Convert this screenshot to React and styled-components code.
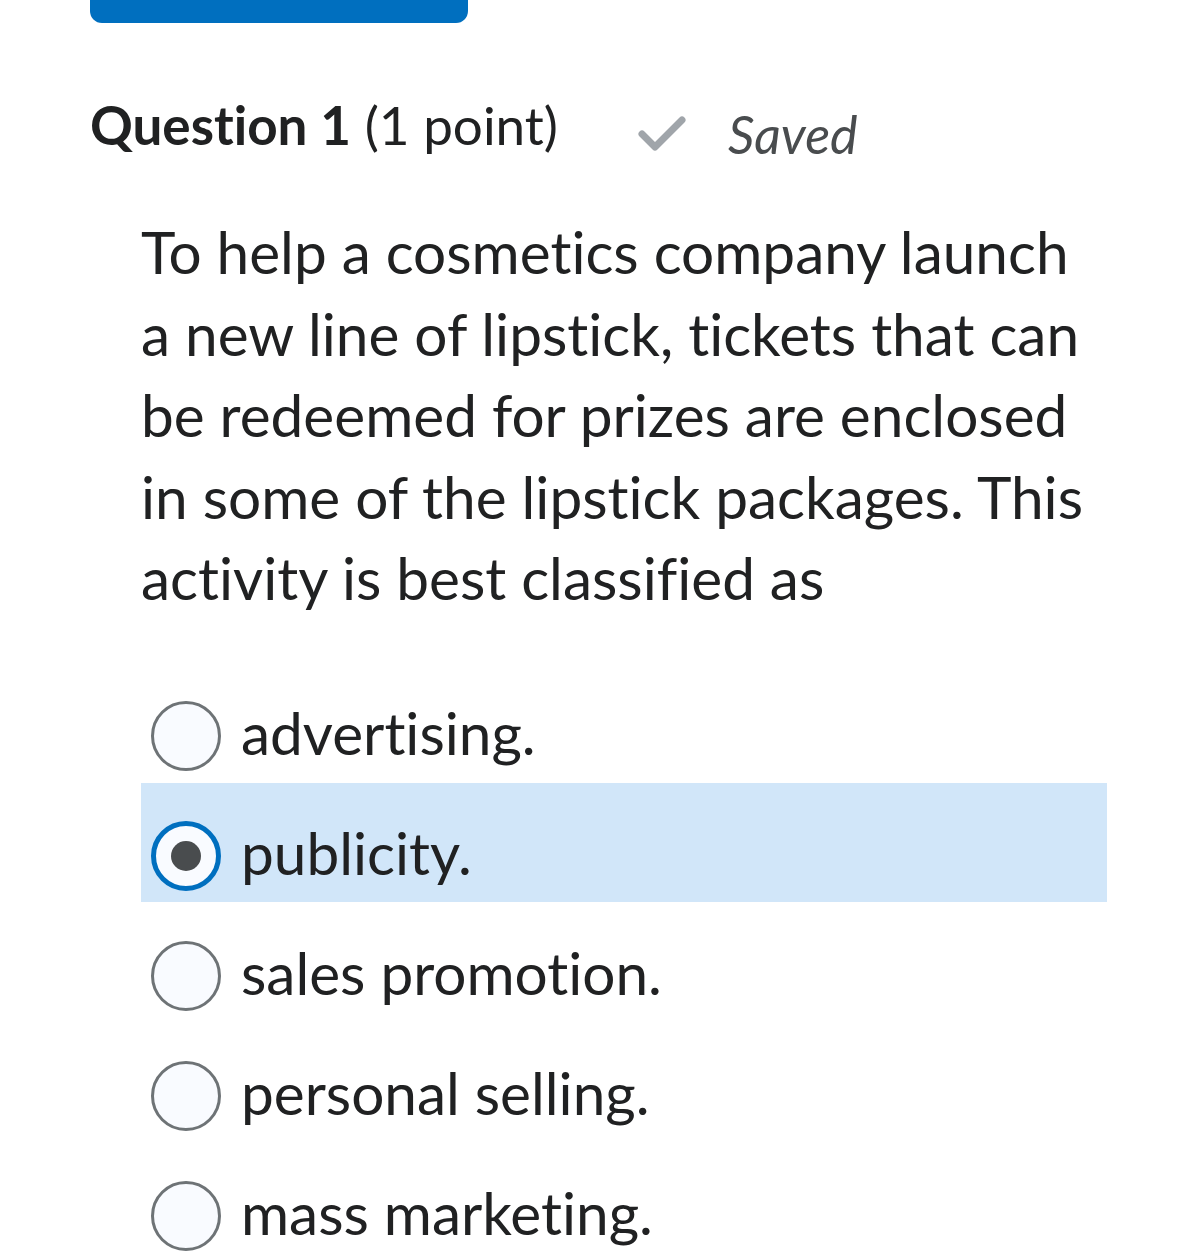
import React from 'react';
import styled, { createGlobalStyle } from 'styled-components';

const GlobalStyle = createGlobalStyle`
  html, body {
    margin: 0;
    padding: 0;
    background: #fff;
  }
  body {
    font-family: Lato, "Noto Sans", sans-serif;
    font-variant-ligatures: none;
    font-feature-settings: "liga" 0, "clig" 0;
    color: #202122;
  }
`;

const Page = styled.div`
  width: 1179px;
  height: 1253px;
  overflow: hidden;
  padding-left: 90px;
  box-sizing: border-box;
`;

const TopButton = styled.div`
  width: 378px;
  height: 23px;
  background: #006fbf;
  border-radius: 0 0 12px 12px;
`;

const Header = styled.div`
  display: flex;
  align-items: baseline;
  margin-top: 72px;
  height: 60px;
`;

const Title = styled.h2`
  margin: 0;
  font-size: 53px;
  font-weight: 400;
  line-height: 60px;
  color: #202122;
  & b {
    font-weight: 700;
  }
`;

const SavedStatus = styled.div`
  display: flex;
  align-items: center;
  gap: 42px;
  margin-left: 80px;
  font-size: 52px;
  font-style: italic;
  color: #494c4e;
  align-self: flex-end;
  transform: translateY(10px);
`;

const Body = styled.div`
  width: 966px;
  margin-left: 51px;
`;

const Prompt = styled.p`
  width: 950px;
  margin: 56px 0 0;
  font-size: 58.5px;
  line-height: 81.5px;
`;

const Options = styled.div`
  display: flex;
  flex-direction: column;
  margin-top: 44px;
`;

const Option = styled.label`
  display: flex;
  align-items: flex-start;
  gap: 20px;
  height: 119px;
  margin-bottom: 1px;
  box-sizing: border-box;
  padding: 34px 0 0 10px;
  background: ${(p) => (p.$selected ? '#d1e6f9' : 'transparent')};
  font-size: 58.5px;
  line-height: 70px;
`;

const Radio = styled.span`
  flex: none;
  margin-top: 4px;
  width: 70px;
  height: 70px;
  box-sizing: border-box;
  border-radius: 50%;
  background: #f9fbff;
  border: ${(p) => (p.$checked ? '5px solid #006fbf' : '3px solid #6e7376')};
  display: flex;
  align-items: center;
  justify-content: center;
  &::after {
    content: '';
    display: ${(p) => (p.$checked ? 'block' : 'none')};
    width: 30px;
    height: 30px;
    border-radius: 50%;
    background: #494c4e;
  }
`;

const CheckIcon = () => (
  <svg width="48" height="36" viewBox="0 0 48 36">
    <path
      d="M4 18 L17 31 L44 4"
      fill="none"
      stroke="#a0a5aa"
      strokeWidth="7"
      strokeLinecap="round"
      strokeLinejoin="round"
    />
  </svg>
);

const answers = [
  'advertising.',
  'publicity.',
  'sales promotion.',
  'personal selling.',
  'mass marketing.',
];

export default function App() {
  const selected = 1;
  return (
    <Page>
      <GlobalStyle />
      <TopButton />
      <Header>
        <Title>
          <b>Question 1</b> (1 point)
        </Title>
        <SavedStatus>
          <CheckIcon />
          <span>Saved</span>
        </SavedStatus>
      </Header>
      <Body>
        <Prompt>
          To help a cosmetics company launch a new line of lipstick, tickets
          that can be redeemed for prizes are enclosed in some of the lipstick
          packages. This activity is best classified as
        </Prompt>
        <Options>
          {answers.map((a, i) => (
            <Option key={a} $selected={i === selected}>
              <Radio $checked={i === selected} />
              <span>{a}</span>
            </Option>
          ))}
        </Options>
      </Body>
    </Page>
  );
}
